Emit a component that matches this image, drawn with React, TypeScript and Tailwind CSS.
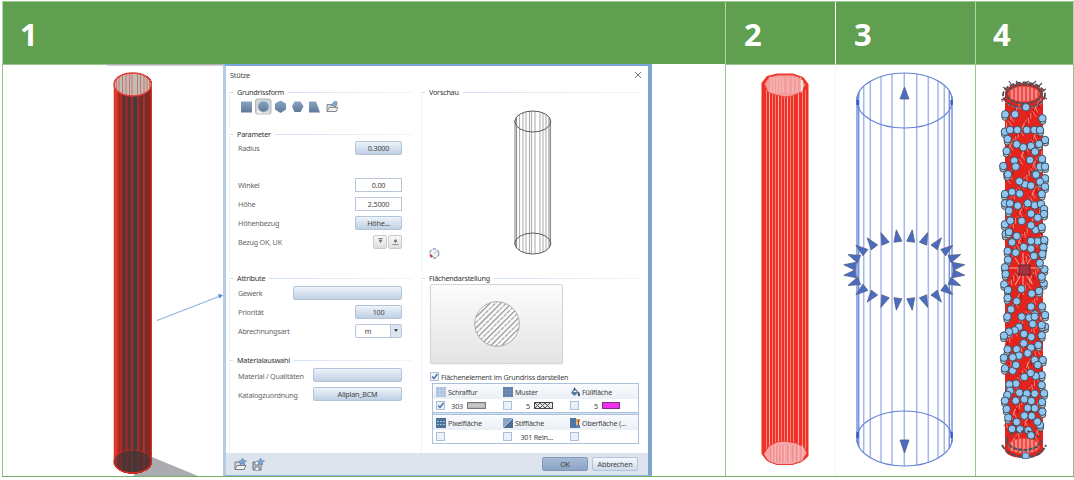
import type { ReactNode } from 'react';

const BANDS: [number, string][] = [
  [113.5, '#e2352a'], [115.5, '#e23a30'], [117, '#d42c22'], [118.4, '#a32a23'], [120, '#b52c24'], [121.6, '#8e2a25'],
  [123.2, '#48383a'], [125.2, '#9a2a26'], [127.6, '#5d3434'], [131.2, '#c42a22'], [132.6, '#5a3535'], [134, '#3e3f40'],
  [137.2, '#b02a24'], [139.2, '#6a3132'], [143.2, '#d32a22'], [144.8, '#5a3434'], [146.6, '#8c2826'], [149, '#7c2a28'], [150.6, '#df3028'],
];

const NODES_TOP: number[][] = [
  [61, 133], [172, 145], [60, 185], [97, 180], [148, 180], [165, 180], [75, 180], [125, 180], [180, 210], [68, 207], [115, 232],
  [95, 223], [162, 222], [138, 228], [150, 245], [65, 243], [135, 270], [171, 267], [88, 272], [55, 288], [92, 290], [165, 290],
  [180, 290], [150, 313], [67, 313], [90, 133],
];
const NODES_MID: number[][] = [
  [54, 13], [138, 14], [165, 25], [150, 35], [105, 43], [88, 34], [123, 47], [165, 50], [45, 72], [66, 66], [155, 72], [89, 71],
  [45, 100], [60, 100], [83, 107], [134, 106], [113, 100], [153, 102], [162, 117], [57, 122], [162, 132], [123, 131], [143, 143],
  [45, 163], [61, 152], [95, 153], [137, 180], [123, 166], [155, 171], [47, 192], [57, 186], [80, 198], [66, 217], [143, 214],
  [163, 210], [123, 213], [123, 236], [101, 231], [160, 232], [77, 248], [53, 243], [157, 252], [132, 258], [54, 269], [163, 298],
  [149, 279], [45, 292], [47, 312], [161, 340], [155, 320], [43, 343], [54, 360], [94, 357], [125, 371], [147, 363], [53, 384],
  [80, 394], [63, 418], [123, 410], [156, 409], [135, 433], [165, 435], [52, 440], [95, 440],
];
const NODES_LOW: number[][] = [
  [118, 8], [134, 5], [165, 35], [155, 30], [128, 27], [87, 36], [74, 46], [57, 50], [42, 62], [102, 57], [155, 61], [124, 66],
  [101, 85], [145, 90], [123, 98], [80, 103], [53, 103], [113, 115], [87, 122], [42, 128], [68, 127], [158, 135], [134, 135],
  [45, 160], [68, 167], [78, 150], [143, 150], [155, 180], [137, 183], [122, 174], [103, 186], [78, 206], [58, 208], [155, 210],
  [60, 227], [110, 236], [88, 233], [52, 240], [162, 235], [134, 236], [45, 257], [77, 257], [103, 253], [124, 258], [156, 261],
  [134, 280], [113, 279], [50, 282], [157, 290], [55, 308], [125, 303], [103, 302], [150, 330], [142, 320], [80, 321], [66, 342],
  [115, 346], [90, 343], [123, 361],
];
const NODES = [
  ...NODES_TOP.map(([x, y]) => [985 + x / 3, 70 + y / 3]),
  ...NODES_MID.map(([x, y]) => [990 + x / 3, 170 + y / 3]),
  ...NODES_LOW.map(([x, y]) => [990 + x / 3, 315 + y / 3]),
];

function SolidColumn() {
  return (
    <svg className="h-[412px] w-[220px] shrink-0" viewBox="3 64 220 412">
      <rect x="3" y="64" width="104" height="1" fill="#9ac78f" />
      <rect x="107" y="64" width="116" height="1.6" fill="#b4b0b6" />
      <path d="M133 476L152 457L198 476Z" fill="#aaacb1" />
      <clipPath id="solid-body">
        <path d="M113.5 84.5A19.2 11.6 0 0 1 151.9 84.5V461.5A19.2 12 0 0 1 113.5 461.5Z" />
      </clipPath>
      <g clipPath="url(#solid-body)">
        {BANDS.map(([x, c]) => (
          <rect key={x} x={x} y="72" width={153 - x} height="404" fill={c} />
        ))}
        <ellipse cx="132.7" cy="461.5" rx="19" ry="11.5" fill="#3d3536" fillOpacity=".6" />
      </g>
      <ellipse cx="132.7" cy="84.5" rx="18.7" ry="11.5" fill="#c0bdb5" />
      {[116.5, 119, 122.5, 126, 129.5, 132, 137.5, 140.5, 144, 147, 149.5].map((x) => {
        const h = 11.5 * Math.sqrt(1 - ((x - 132.7) / 18.7) ** 2);
        return <path key={x} d={`M${x} ${84.5 - h}V${84.5 + h}`} stroke="#cf716b" strokeWidth="1" />;
      })}
      <ellipse cx="132.7" cy="84.5" rx="18.7" ry="11.5" fill="none" stroke="#e13c38" strokeWidth="1.4" />
      <path d="M114 461.5A18.7 11.5 0 0 0 151.4 461.5" fill="none" stroke="#e22a22" strokeWidth="1.3" />
      <path d="M114 461.5A18.7 11.5 0 0 1 151.4 461.5" fill="none" stroke="#e22a22" strokeWidth="1" strokeDasharray="3 1.5" />
      <path d="M157 320.5L219 296.500" stroke="#8db5e1" strokeWidth="1.1" />
      <path d="M218 294L223 295L219.5 298.500Z" fill="#4d8bd0" />
    </svg>
  );
}

function RedColumn() {
  return (
    <svg className="h-full w-full" viewBox="726 65 109 411">
      <path d="M761.5 83L767 76L777 73.5H793L803 77L808.5 84V456L802 462L792 465H777L767 461L761.5 454Z" fill="#ee3124" />
      {[766.5, 769.5, 772.5, 775.5, 778.5, 781.5, 784.5, 787.5, 790.5, 793.5, 798.5, 802.5, 805.5].map((x, i) => (
        <path key={x} d={`M${x} 90V455`} stroke={i % 3 === 1 ? '#fcc4bf' : '#f79188'} strokeWidth=".9" />
      ))}
      <path d="M764.5 84L769 77L778 75H793L801 78L805.5 85L801 92L792 96L785 97L776 95L768 92Z" fill="#f29c9c" stroke="#ec4d45" strokeWidth=".9" />
      <path d="M763.5 454L769 446L777 442L785 441L796 443L804 447L807 453L802 461L792 464.5H777L768 461Z" fill="#f4a5a5" stroke="#ee4038" strokeWidth="1" />
      {[771, 774, 777, 780, 783, 788, 793, 797, 801].map((x) => (
        <g key={x}>
          <path d={`M${x} 77V93`} stroke="#f8cccc" strokeWidth=".8" />
          <path d={`M${x} 445V462`} stroke="#e96d6a" strokeWidth=".7" />
          <path d={`M${x + 1.2} 445V462`} stroke="#f9cccc" strokeWidth=".7" />
        </g>
      ))}
      <path d="M802 80V91" stroke="#fff" strokeWidth="1.3" />
    </svg>
  );
}

function BlueColumn() {
  const arrows = Array.from({ length: 24 }, (_, i) => {
    const a = ((i * 15 + 7.5) * Math.PI) / 180;
    const tx = 904.3 + 61 * Math.sin(a);
    const ty = 270 - 40.5 * Math.cos(a);
    const bx = tx - 12 * Math.sin(a);
    const by = ty + 12 * Math.cos(a);
    const px = 4 * Math.cos(a);
    const py = 4 * Math.sin(a);
    return `M${tx} ${ty}L${bx + px} ${by + py}L${bx - px} ${by - py}Z`;
  });
  const lines = [857, 858.7, 863.7, 870.3, 881, 892, 904.3, 916.7, 928.3, 938, 944.3, 949.3, 952];
  return (
    <svg className="h-full w-full" viewBox="836 65 139 411">
      {lines.map((x, i) => {
        const h = 27.5 * Math.sqrt(Math.max(0, 1 - ((x - 904.5) / 48) ** 2));
        return (
          <path key={x} d={`M${x} ${100.5 - h}V${438.500 + h}`} stroke={i < 2 || i > 10 ? '#7b95dc' : '#a5b7e8'} strokeWidth="1.5" />
        );
      })}
      <g fill="none" stroke="#6482d6" strokeWidth="1.1">
        <ellipse cx="904.5" cy="100.5" rx="47.7" ry="27.5" />
        <ellipse cx="904.5" cy="438.5" rx="47.7" ry="27.5" />
      </g>
      <g fill="#2c56c8">
        <rect x="856.5" y="100" width="2.2" height="5" />
        <rect x="950.5" y="100" width="2.2" height="5" />
        <rect x="856.5" y="432" width="2.2" height="6" />
        <rect x="950.5" y="432" width="2.2" height="6" />
      </g>
      <g fill="#4a6cc4" stroke="#53607f" strokeWidth=".8">
        {arrows.map((d) => (
          <path key={d} d={d} />
        ))}
        <path d="M904.5 87L909 99H900Z" />
        <path d="M904.5 453L909 440H900Z" />
      </g>
    </svg>
  );
}

function MeshColumn() {
  const streaks = Array.from({ length: 330 }, (_, i) => {
    const x = 1006 + ((i * 17.3) % 36);
    const y = 96 + i * 1.06;
    return { x, y, dx: ((i * 7) % 9) - 4, light: i % 3 !== 0 };
  });
  return (
    <svg className="h-full w-full" viewBox="976 65 97 411">
      <path d="M1005 93A19 10 0 0 1 1043 93V450A19 8 0 0 1 1005 450Z" fill="#e4231d" />
      {streaks.map((s, i) => (
        <path key={i} d={`M${s.x} ${s.y}l${s.dx} 6`} stroke={s.light ? '#f59a93' : '#8e1b1b'} strokeWidth=".8" />
      ))}
      <path d="M1015 258L1032 284M1032 256L1015 285M1023 253V290M1009 268H1041" stroke="#f7aaaa" strokeWidth="1" />
      {[94, 446].map((y) => (
        <g key={y}>
          <ellipse cx="1024" cy={y} rx="16" ry="8" fill="#ef4c46" />
          <path d={`M1012 ${y - 4}V${y + 5}M1016 ${y - 6}V${y + 6}M1020 ${y - 7}V${y + 7}M1024 ${y - 7}V${y + 7}M1028 ${y - 7}V${y + 7}M1032 ${y - 6}V${y + 6}M1036 ${y - 4}V${y + 4}`} stroke="#f8b4b4" strokeWidth="1.2" />
        </g>
      ))}
      <g fill="none" stroke="#4a525a">
        <ellipse cx="1024" cy="94" rx="17" ry="9.5" strokeWidth="2" strokeDasharray="4 1.2" />
        <ellipse cx="1024" cy="95" rx="21" ry="12.5" strokeWidth="1.8" strokeDasharray="5 1.5" />
        <path d="M1011 84L1009 81M1018 83L1016 81M1026 83L1029 81M1033 84L1036 81M1038 87L1042 83M1007 90L1003 87M1041 92L1046 89M1043 97L1047 99M1005 98L1001 100" strokeWidth="1.1" />
      </g>
      <path d="M1005 102A21 11 0 0 0 1043 102" fill="none" stroke="#7aa0bf" strokeWidth="1" strokeDasharray="2 2" />
      {NODES.map(([x, y], i) => (
        <g key={i}>
          {(x < 1010 || x > 1038) && (
            <circle cx={x + (x < 1024 ? -0.5 : 0.5)} cy={y + 3} r="3" fill="#b5c3ce" stroke="#4b5258" strokeWidth="1" />
          )}
          <circle cx={x} cy={y} r="3.8" fill="#91c5f2" stroke="#3a5063" strokeWidth="1" />
        </g>
      ))}
      <g fill="none" stroke="#4a525a">
        <path d="M1007 440A17 10 0 1 0 1041 440" strokeWidth="2.2" strokeDasharray="4 1.2" />
        <path d="M1007 440A17 9 0 0 1 1041 440" strokeWidth="1.8" strokeDasharray="3 3" />
        <path d="M1002 445Q1008 456 1024 457T1046 445" strokeWidth="2" strokeDasharray="5 1.4" />
      </g>
      <circle cx="1026" cy="107.3" r="3.8" fill="#91c5f2" stroke="#3a5063" strokeWidth="1" />
      <rect x="1022.5" y="453" width="6.5" height="5.5" fill="#91c5f2" stroke="#3a6083" strokeWidth=".8" />
      <rect x="1019" y="265" width="11" height="10" fill="#a43444" stroke="#6b1c27" strokeWidth="1" />
    </svg>
  );
}

function Raised({ size, children }: { size: string; children?: ReactNode }) {
  return (
    <div className={'flex h-[14px] items-center justify-center rounded-[2px] border border-[#b3c3d8] bg-linear-to-b from-[#edf3fa] to-[#bfd0e4] ' + size}>
      {children}
    </div>
  );
}

function Field({ children }: { children: ReactNode }) {
  return (
    <div className="flex h-[14px] w-[47px] items-center justify-center border border-[#b8c6d8] bg-white">{children}</div>
  );
}

function Row({ label, height = 'h-[19px]', children }: { label: string; height?: string; children?: ReactNode }) {
  return (
    <div className={'flex w-[172px] items-center justify-between pl-2 ' + height}>
      <span className="pt-px text-[#666]">{label}</span>
      {children}
    </div>
  );
}

function Group({ title, size, children }: { title: string; size: string; children?: ReactNode }) {
  return (
    <section className={'flex shrink-0 flex-col ' + size}>
      <div className="flex h-3 items-center">
        <span className="h-px w-1 bg-[#d5e2f1]" />
        <span className="px-1 text-[#333]">{title}</span>
        <span className="h-px flex-1 bg-linear-to-r from-[#d5e2f1] to-[#f2f6fb]" />
      </div>
      <div className="-mt-1 flex-1 border-l border-[#edf2f9] pt-[3px]">{children}</div>
    </section>
  );
}

function ShapeIcons() {
  return (
    <svg className="h-[18px] w-[110px]" viewBox="236 97.500 110 18">
      <defs>
        <linearGradient id="steel" x1="0" y1="0" x2="0" y2="1">
          <stop offset="0" stopColor="#8ba4c3" />
          <stop offset="1" stopColor="#5e7997" />
        </linearGradient>
      </defs>
      <rect x="255.5" y="99.5" width="15.5" height="15" rx="2" fill="#d2d4d6" stroke="#b2b5b8" />
      <path d="M258 109Q260 114.500 269 113V114H257Z" fill="#f4f4f4" />
      <g fill="url(#steel)">
        <rect x="241" y="102" width="11" height="11" />
        <circle cx="263.5" cy="107" r="5.7" stroke="#dce6f1" strokeWidth=".7" />
        <path d="M280.5 101L286 104V110L280.5 113.5L275 110V104Z" />
        <path d="M292 107L294.5 102H300.5L303.5 107L300.5 112.5H294.5Z" />
        <path d="M309 102H316L320 113H309Z" />
      </g>
      <path d="M327 105H332L334 107H336V112H327Z" fill="#d5d5d3" stroke="#767a7d" strokeWidth=".8" />
      <path d="M327 112L329.5 108H338L336 112Z" fill="#f0f0ee" stroke="#767a7d" strokeWidth=".8" />
      <path d="M331 106L334 102H337V106Z" fill="#86a9ce" stroke="#617e9c" strokeWidth=".5" />
    </svg>
  );
}

function PreviewDrawing() {
  return (
    <svg className="h-[164px] w-[210px]" viewBox="422 97 210 164">
      {[515, 516.5, 519.5, 523, 526, 529.5, 531.5, 535, 540, 543, 546, 549, 550.5].map((x, i) => {
        const h = 10.5 * Math.sqrt(Math.max(0, 1 - ((x - 532.8) / 18) ** 2));
        return (
          <path key={x} d={`M${x} ${121.5 - h}V${243.5 + h}`} stroke={i < 2 || i > 10 ? '#909090' : '#b0b0b0'} strokeWidth="1.1" />
        );
      })}
      <g fill="none" stroke="#5c5c5c" strokeWidth="1">
        <ellipse cx="532.8" cy="121.5" rx="18" ry="10.5" />
        <ellipse cx="532.8" cy="243.5" rx="18" ry="10.5" />
      </g>
      <circle cx="434.3" cy="253.5" r="4.6" fill="#f4f4f4" stroke="#758dba" strokeWidth="1.1" strokeDasharray="3.5 1.4" />
      <path d="M434 254L437 251" stroke="#aaa" strokeWidth=".8" />
      <path d="M430 253.5L433.5 256.5L430.5 257.5Z" fill="#d73545" />
    </svg>
  );
}

function HatchPreview() {
  return (
    <div className="flex h-[80px] w-[133px] items-center justify-center rounded-[2px] border border-[#d4d4d4] bg-linear-to-b from-[#fcfcfc] to-[#e4e4e4] shadow-xs">
      <svg className="size-[46px]" viewBox="0 0 46 46">
        <clipPath id="hatch-disc">
          <circle cx="23" cy="23" r="22.3" />
        </clipPath>
        <circle cx="23" cy="23" r="22.3" fill="#fafafa" />
        <g clipPath="url(#hatch-disc)">
          {Array.from({ length: 17 }, (_, i) => (
            <path
              key={i}
              d={`M${i * 5.4 - 44} 46L${i * 5.4 + 2} 0`}
              stroke={i % 2 ? '#999' : '#aaa'}
              strokeWidth="1.3"
              strokeDasharray={i % 2 ? undefined : '4 .8'}
            />
          ))}
        </g>
        <circle cx="23" cy="23" r="22.3" fill="none" stroke="#a0a0a0" strokeWidth=".8" />
      </svg>
    </div>
  );
}

function Check({ on }: { on?: boolean }) {
  return (
    <svg className="size-[9px] shrink-0" viewBox="0 0 9 9">
      <rect x=".5" y=".5" width="8" height="8" fill="#eaf1f9" stroke="#a9bfda" />
      {on && <path d="M2 4.5L4 6.5L7.5 2" fill="none" stroke="#4a6d9b" strokeWidth="1.4" />}
    </svg>
  );
}

const GLYPHS: Record<string, ReactNode> = {
  hatch: (
    <>
      <rect width="10" height="10" fill="#adc3de" />
      <path d="M0 3.5H10M0 7H10M3.5 0V10M7 0V10" stroke="#c6d6e9" strokeWidth=".6" />
    </>
  ),
  pattern: (
    <>
      <rect width="10" height="10" fill="#5f82ab" />
      <path d="M0 3.3H10M0 6.6H10M3.3 0V10M6.6 0V10" stroke="#7896ba" strokeWidth=".6" />
    </>
  ),
  fill: (
    <>
      <path d="M4.5 .5L8.5 5L4.5 9L1 6Z" fill="#5b7ba1" />
      <path d="M4.5 .5V4M8.5 5Q11 9 8.8 9Q7.5 8.5 8.5 5" stroke="#35465c" strokeWidth=".8" fill="#44617f" />
      <path d="M3 5L5 3L7 5Z" fill="#e6edf5" />
    </>
  ),
  pixel: (
    <>
      <rect width="10" height="10" fill="#4d719d" />
      <path d="M1 3.500H9M1 6.500H9" stroke="#a8bfd9" strokeWidth="1" strokeDasharray="2 1" />
    </>
  ),
  pen: (
    <>
      <rect width="10" height="10" fill="#87a5c7" />
      <path d="M0 10L10 0V10Z" fill="#4b6d95" />
      <path d="M0 10L10 0" stroke="#e2ebf5" strokeWidth=".7" />
    </>
  ),
  surface: (
    <>
      <path d="M0 0H6V10H0Z" fill="#4f75a3" />
      <path d="M6 1H10V4H6Z" fill="#e0a058" />
      <path d="M6 4H8V7H6Z" fill="#e9c37a" />
      <path d="M6 7H10V10H6Z" fill="#5d82af" />
      <path d="M8.500 2V7" stroke="#923f4b" strokeWidth="1" />
    </>
  ),
};

function Head({ glyph, children }: { glyph: string; children: ReactNode }) {
  return (
    <div className="flex w-[67px] shrink-0 items-center gap-[2px] whitespace-nowrap pl-[3px] text-[#444]">
      <svg className="size-[10px] shrink-0" viewBox="0 0 10 10">
        {GLYPHS[glyph]}
      </svg>
      {children}
    </div>
  );
}

function Value({ on, children }: { on?: boolean; children?: ReactNode }) {
  return (
    <div className="flex w-[67px] shrink-0 items-center justify-between whitespace-nowrap pl-[3px] pr-[14px]">
      <Check on={on} />
      <span className="flex items-center gap-[4px]">{children}</span>
    </div>
  );
}

function SurfaceTable() {
  const head = 'flex h-[15px] overflow-hidden bg-linear-to-b from-[#fafbfd] to-[#ebeff5]';
  const body = 'flex h-[13px] overflow-hidden';
  return (
    <div className="flex w-[207px] flex-col border border-[#a9c1dc] bg-white">
      <div className={head}>
        <Head glyph="hatch">Schraffur</Head>
        <Head glyph="pattern">Muster</Head>
        <Head glyph="fill">Füllfläche</Head>
      </div>
      <div className={body}>
        <Value on>
          303
          <svg className="h-[7px] w-[19px]" viewBox="0 0 19 7">
            <rect x=".5" y=".5" width="18" height="6" fill="#b8b8b8" stroke="#777" />
            <path d="M2 4.5L4 2.5M5 4.5L7 2.5M8 4.5L10 2.5M11 4.5L13 2.5M14 4.5L16 2.5" stroke="#f5f5f5" />
          </svg>
        </Value>
        <Value>
          5
          <svg className="h-[7px] w-[19px]" viewBox="0 0 19 7">
            <rect x=".5" y=".5" width="18" height="6" fill="#e4e4e4" stroke="#444" />
            <path d="M1 1L6 6L11 1L16 6M1 6L6 1L11 6L16 1" fill="none" stroke="#555" />
          </svg>
        </Value>
        <Value>
          5<span className="h-[7px] w-[18px] border border-[#8c2a8c] bg-[#ea33ea]" />
        </Value>
      </div>
      <div className="h-[3px] border-y border-[#a9c1dc] bg-[#d5e2f0]" />
      <div className={head}>
        <Head glyph="pixel">Pixelfläche</Head>
        <Head glyph="pen">Stiffläche</Head>
        <Head glyph="surface">Oberfläche (...</Head>
      </div>
      <div className={body}>
        <Value />
        <Value>301 Rein...</Value>
        <Value />
      </div>
    </div>
  );
}

function FooterIcon({ save }: { save?: boolean }) {
  return (
    <svg className="h-[13px] w-[13px]" viewBox="0 0 13 13">
      {save ? (
        <>
          <path d="M1 4H9V12H1Z" fill="#bfc5cb" stroke="#6a7178" />
          <path d="M3 4V7H7V4M3 12V9H7V12" fill="#eee" stroke="#6a7178" strokeWidth=".8" />
        </>
      ) : (
        <>
          <path d="M1 4H5L6 5.5H10V11.5H1Z" fill="#dcdcd8" stroke="#767d84" />
          <path d="M1 11.5L3 7.5H12L10 11.5Z" fill="#efefec" stroke="#767d84" />
        </>
      )}
      <path d="M8.5 0L9.7 2.4L12.5 3L10.3 4.7L10.8 7L8.5 5.7L6.2 7L6.7 4.7L5 3L7.5 2.4Z" fill="#7ea5d4" stroke="#5f81aa" strokeWidth=".6" />
    </svg>
  );
}

function PinButton({ top }: { top?: boolean }) {
  return (
    <div className="flex size-[14px] items-center justify-center rounded-[2px] border border-[#cacaca] bg-linear-to-b from-[#f8f8f8] to-[#dedede]">
      <svg className="size-[9px]" viewBox="0 0 9 9">
        <path d={top ? 'M2 1.500H7M3 3H6L4.500 5.500Z' : 'M1.500 7.500H7.500M4.500 2.500L6 4L4.500 5.500L3 4Z'} fill="#777" stroke="#777" strokeWidth=".8" />
      </svg>
    </div>
  );
}

function ColumnDialog() {
  return (
    <div className="flex h-[412px] w-[429px] shrink-0 flex-col border-t-2 border-r-4 border-b border-l-[3px] border-t-[#7aa7de] border-r-[#7ea3cf] border-b-[#8eb2dc] border-l-[#b4cde4] bg-white text-[7.2px] leading-[10px] tracking-[-0.2px] text-[#444]">
      <div className="flex h-[20px] shrink-0 items-center justify-between pb-[2px] pl-[4px] pr-[6px]">
        <span>Stütze</span>
        <svg className="size-[8px]" viewBox="0 0 8 8">
          <path d="M1 1L7 7M7 1L1 7" stroke="#6d6d6d" strokeWidth=".9" />
        </svg>
      </div>
      <div className="flex min-h-0 flex-1">
        <div className="flex w-[194px] shrink-0 flex-col pl-[3px] pr-2">
          <Group title="Grundrissform" size="h-[42px]">
            <div className="pl-[6px]">
              <ShapeIcons />
            </div>
          </Group>
          <Group title="Parameter" size="h-[144px]">
            <Row label="Radius" height="h-[17px]">
              <Raised size="w-[47px]">0.3000</Raised>
            </Row>
            <div className="h-[19px]" />
            <Row label="Winkel">
              <Field>0.00</Field>
            </Row>
            <Row label="Höhe">
              <Field>2.5000</Field>
            </Row>
            <Row label="Höhenbezug">
              <Raised size="w-[47px]">Höhe...</Raised>
            </Row>
            <Row label="Bezug OK, UK">
              <span className="flex gap-px">
                <PinButton top />
                <PinButton />
              </span>
            </Row>
          </Group>
          <Group title="Attribute" size="h-[82px]">
            <Row label="Gewerk">
              <Raised size="w-[109px]" />
            </Row>
            <Row label="Priorität">
              <Raised size="w-[47px]">100</Raised>
            </Row>
            <Row label="Abrechnungsart">
              <div className="flex h-[14px] w-[47px] items-center rounded-[2px] border border-[#b8c6d8] bg-white">
                <span className="flex-1 pl-[2px] pr-3 text-center">m</span>
                <span className="flex h-full w-[11px] items-center justify-center border-l border-[#b8c6d8] bg-[#dbe6f2]">
                  <svg className="h-[3px] w-[4px]" viewBox="0 0 5 3">
                    <path d="M0 0H5L2.5 3Z" fill="#222" />
                  </svg>
                </span>
              </div>
            </Row>
          </Group>
          <Group title="Materialauswahl" size="h-[99px]">
            <Row label="Material / Qualitäten" height="h-[20px]">
              <Raised size="w-[89px]" />
            </Row>
            <Row label="Katalogzuordnung" height="h-[18px]">
              <Raised size="w-[89px]">Allplan_BCM</Raised>
            </Row>
          </Group>
        </div>
        <div className="flex flex-1 flex-col pl-px pr-[6px]">
          <Group title="Vorschau" size="h-[186px]">
            <PreviewDrawing />
          </Group>
          <Group title="Flächendarstellung" size="h-[181px]">
            <div className="flex flex-col pl-2 pt-px">
              <HatchPreview />
              <div className="flex h-[19px] items-center gap-[2px] pt-[6px]">
                <Check on />
                <span className="whitespace-nowrap">Flächenelement im Grundriss darstellen</span>
              </div>
              <div className="pl-[2px]">
                <SurfaceTable />
              </div>
            </div>
          </Group>
        </div>
      </div>
      <div className="flex h-[22px] shrink-0 items-center bg-[#dde4ee] pl-[8px] pr-[10px]">
        <FooterIcon />
        <span className="w-[5px]" />
        <FooterIcon save />
        <span className="flex-1" />
        <div className="flex h-[14px] w-[46px] items-center justify-center rounded-[2px] border border-[#8198b8] bg-linear-to-b from-[#a6bad5] to-[#8ba4c5]">OK</div>
        <div className="ml-[4px] flex h-[14px] w-[46px] items-center justify-center rounded-[2px] border border-[#b3c3d8] bg-linear-to-b from-[#f5f8fc] to-[#cfdcea]">Abbrechen</div>
      </div>
    </div>
  );
}

const COLS = 'grid grid-cols-[723px_110px_140px_98px_1px]';

export default function App() {
  return (
    <main className="h-[480px] w-[1074px] overflow-hidden bg-white pl-[2px] pt-px font-['Noto_Sans',sans-serif]">
      <div className={COLS + ' h-[63px] border-t border-[#9ac78f] bg-[#5f9f4f] text-[31px] font-bold leading-none text-white'}>
        <div className="flex items-center border-l border-[#b3d6aa] pl-[17px] pt-[3px]">1</div>
        <div className="flex items-center border-l border-[#b3d6aa] pl-[18px] pt-[3px]">2</div>
        <div className="flex items-center border-l border-white pl-[18px] pt-[3px]">3</div>
        <div className="flex items-center border-l border-[#b3d6aa] pl-[17px] pt-[3px]">4</div>
        <div className="bg-[#b3d6aa]" />
      </div>
      <div className={COLS + ' h-[413px] border-b border-[#72b066]'}>
        <div className="flex border-l border-[#93c388]">
          <SolidColumn />
          <ColumnDialog />
        </div>
        <div className="border-t border-l border-[#9ac78f]">
          <RedColumn />
        </div>
        <div className="border-t border-l border-t-[#9ac78f] border-l-[#f4f6f4]">
          <BlueColumn />
        </div>
        <div className="border-t border-l border-[#9ac78f]">
          <MeshColumn />
        </div>
        <div className="bg-[#93c388]" />
      </div>
    </main>
  );
}
